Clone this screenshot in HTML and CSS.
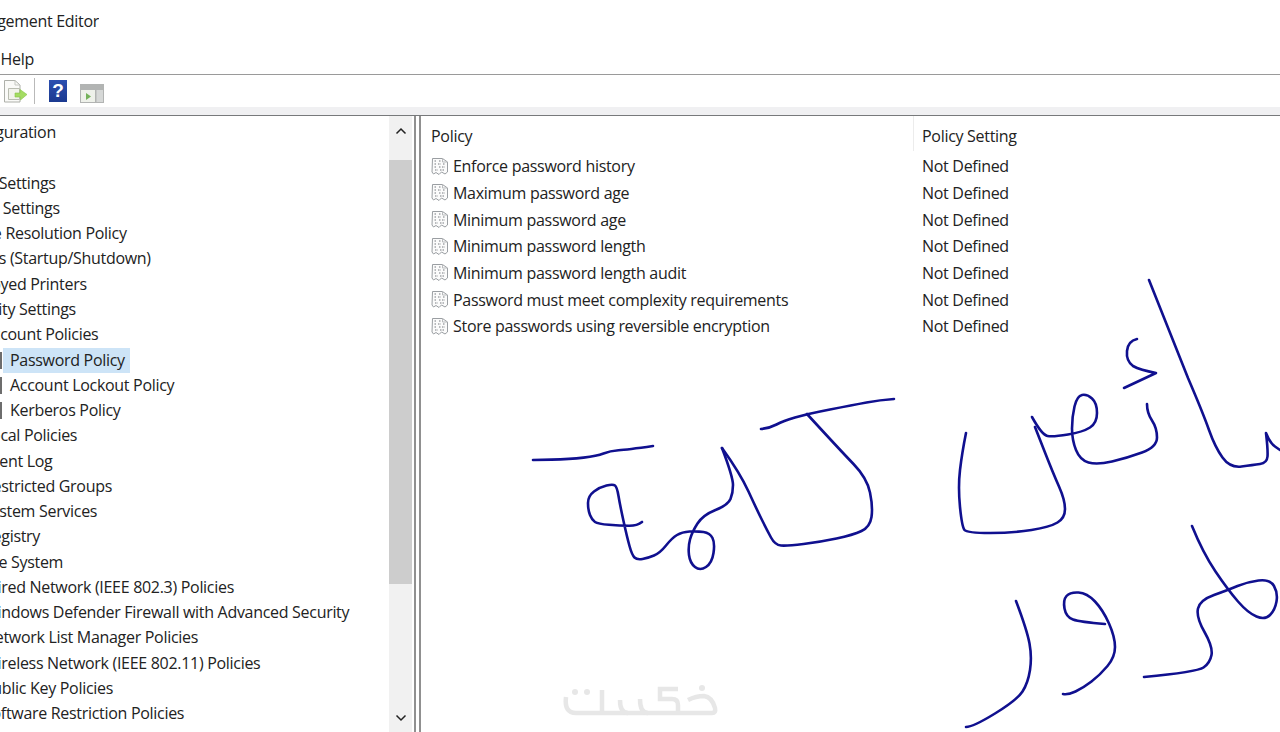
FILE: index.html
```html
<!DOCTYPE html>
<html lang="en">
<head>
    <meta charset="UTF-8">
    <title>Group Policy Management Editor</title>
    <link rel="stylesheet" href="styles.css">
</head>
<body>

<svg width="0" height="0" class="defs">
    <symbol id="policy-icon" viewBox="0 0 18 19">
        <path d="M1.5 1.5 H11.5 L16.5 5 V15 L14 17 L10.5 15 L8 17.5 L5 15.5 L2.5 17 L1 15 Z" fill="#fbfbfb" stroke="#9a9ea2"/>
        <path d="M3.5 4 H6 M8 4 H10 M3.5 7 H5 M7 7 H10 M12 7 H14 M3.5 10 H6 M8 10 H9.5 M11 10 H14 M4 13 H7 M9 13 H13" stroke="#777b80" stroke-width="1.2" stroke-dasharray="1.5 1"/>
        <path d="M11.5 1.5 V5 H16.5" fill="none" stroke="#b8bbbd"/>
    </symbol>
</svg>

<div class="title-bar"><span class="title-text">Group Policy Management Editor</span></div>

<div class="menu-bar"><span class="menu-text">Action View Help</span></div>

<div class="toolbar">
    <svg class="tool-export" width="24" height="24" viewBox="0 0 24 24">
        <path d="M.5 1.5 H11 L16 6 V23 H.5 Z" fill="#fafaf8" stroke="#aeb0aa"/>
        <path d="M11 1.5 V6 H16" fill="none" stroke="#c6c8c2"/>
        <path d="M4.5 9.5 H15.5 V20.5 H4.5 Z" fill="#f2f3ec" stroke="#b9bcb1"/>
        <path d="M11 14 H16 V10.5 L23 15.5 L16.5 21 V18 H11 Z" fill="#a4dc62" stroke="#86c548" stroke-width=".6"/>
    </svg>
    <div class="tool-sep"></div>
    <div class="tool-help">?</div>
    <svg class="tool-panel" width="24" height="19" viewBox="0 0 24 19">
        <rect width="24" height="19" fill="#b2b4b3"/>
        <rect x="1" y="6" width="14" height="12" fill="#eef1ea"/>
        <rect x="16.5" y="6" width="6.5" height="12" fill="#d6d8d7"/>
        <path d="M6 9 L11 12.5 L6 16 Z" fill="#74b25a"/>
    </svg>
</div>

<div class="band"></div>

<div class="panes">
    <div class="tree-pane">
        <div class="tree">
            <div class="tree-row lvl-a"><span>Computer Configuration</span></div>
            <div class="tree-row lvl-b"><span>Policies</span></div>
            <div class="tree-row lvl-1"><span>Software Settings</span></div>
            <div class="tree-row lvl-1 win"><span>Windows Settings</span></div>
            <div class="tree-row lvl-2"><span>Name Resolution Policy</span></div>
            <div class="tree-row lvl-2"><span>Scripts (Startup/Shutdown)</span></div>
            <div class="tree-row lvl-2"><span>Deployed Printers</span></div>
            <div class="tree-row lvl-2"><span>Security Settings</span></div>
            <div class="tree-row lvl-3"><span>Account Policies</span></div>
            <div class="tree-row lvl-4"><i class="tree-icon"></i><span class="selected">Password Policy</span></div>
            <div class="tree-row lvl-4"><i class="tree-icon"></i><span>Account Lockout Policy</span></div>
            <div class="tree-row lvl-4"><i class="tree-icon"></i><span>Kerberos Policy</span></div>
            <div class="tree-row lvl-3"><span>Local Policies</span></div>
            <div class="tree-row lvl-3"><span>Event Log</span></div>
            <div class="tree-row lvl-3"><span>Restricted Groups</span></div>
            <div class="tree-row lvl-3"><span>System Services</span></div>
            <div class="tree-row lvl-3"><span>Registry</span></div>
            <div class="tree-row lvl-3"><span>File System</span></div>
            <div class="tree-row lvl-3"><span>Wired Network (IEEE 802.3) Policies</span></div>
            <div class="tree-row lvl-3"><span>Windows Defender Firewall with Advanced Security</span></div>
            <div class="tree-row lvl-3"><span>Network List Manager Policies</span></div>
            <div class="tree-row lvl-3"><span>Wireless Network (IEEE 802.11) Policies</span></div>
            <div class="tree-row lvl-3"><span>Public Key Policies</span></div>
            <div class="tree-row lvl-3"><span>Software Restriction Policies</span></div>
        </div>
        <div class="scrollbar">
            <svg class="scroll-arrow" width="12" height="8" viewBox="0 0 12 8"><path d="M1.5 6.5 L6 2 L10.5 6.5" fill="none" stroke="#222" stroke-width="1.5"/></svg>
            <div class="scroll-gap-top"></div>
            <div class="scroll-thumb"></div>
            <div class="scroll-gap-bottom"></div>
            <svg class="scroll-arrow arrow-down" width="12" height="8" viewBox="0 0 12 8"><path d="M1.5 1.5 L6 6 L10.5 1.5" fill="none" stroke="#222" stroke-width="1.5"/></svg>
        </div>
    </div>

    <div class="list-pane">
        <div class="list-head">
            <div class="col-name">Policy</div>
            <div class="col-setting">Policy Setting</div>
        </div>
        <div class="list-row">
            <div class="col-name"><svg class="row-icon"><use href="#policy-icon"/></svg>Enforce password history</div>
            <div class="col-setting">Not Defined</div>
        </div>
        <div class="list-row">
            <div class="col-name"><svg class="row-icon"><use href="#policy-icon"/></svg>Maximum password age</div>
            <div class="col-setting">Not Defined</div>
        </div>
        <div class="list-row">
            <div class="col-name"><svg class="row-icon"><use href="#policy-icon"/></svg>Minimum password age</div>
            <div class="col-setting">Not Defined</div>
        </div>
        <div class="list-row">
            <div class="col-name"><svg class="row-icon"><use href="#policy-icon"/></svg>Minimum password length</div>
            <div class="col-setting">Not Defined</div>
        </div>
        <div class="list-row">
            <div class="col-name"><svg class="row-icon"><use href="#policy-icon"/></svg>Minimum password length audit</div>
            <div class="col-setting">Not Defined</div>
        </div>
        <div class="list-row">
            <div class="col-name"><svg class="row-icon"><use href="#policy-icon"/></svg>Password must meet complexity requirements</div>
            <div class="col-setting">Not Defined</div>
        </div>
        <div class="list-row">
            <div class="col-name"><svg class="row-icon"><use href="#policy-icon"/></svg>Store passwords using reversible encryption</div>
            <div class="col-setting">Not Defined</div>
        </div>
    </div>
</div>

<!-- handwriting drawn over the screenshot -->
<svg class="scribble" width="1280" height="732" viewBox="0 0 1280 732">
    <g class="ink">
        <path d="M533 460 L551.5 459.6 Q570 459.3 583.5 457.6 Q597 456 603.5 453.5 Q610 451 618.5 450.3 Q627 449.7 653 446"/>
        <path d="M642 522 Q637 526 628.5 525.8 Q620 525.7 609 524.8 Q598 524 595 522 Q592 520 590 515 Q588 510 588 503 Q588 496 594 491.5 Q600 487 606.5 485.5 Q613 484 615 485.5 Q617 487 618.5 496 Q620 505 623.5 521 Q627 537 629.5 546 Q632 555 634.5 557.5 Q637 560 642.5 559 Q648 558 654 555.5 Q660 553 666 545.5 Q672 538 677 535 Q682 532 689.5 531.5 Q697 531 703.5 532 Q710 533 712.5 538 Q715 543 713.5 553 Q712 563 706 567 Q700 571 695 567 Q690 563 689 555 Q688 547 690 539.5 Q692 532 697.5 523.5 Q703 515 715.5 510 Q728 505 730.5 499 Q733 493 733 485 Q733 477 722 448"/>
        <path d="M722 448 Q740 473 748.5 491.5 Q757 510 762 520 Q767 530 771 537.5 Q775 545 781 545.5 Q787 546 803.5 544 Q820 542 836.5 538.5 Q853 535 861.5 531 Q870 527 871.5 517 Q873 507 870 492.5 Q867 478 853.5 464 Q840 450 807 414"/>
        <path d="M761 429 Q770 428 776.5 424.5 Q783 421 795 417.5 Q807 414 830 409.5 Q853 405 866.5 402.5 Q880 400 894 399"/>
        <path d="M1149 280 L1188 378 Q1203 413 1209 430 Q1215 447 1222.5 457.5 Q1230 468 1241.5 466.5 Q1253 465 1260 464 Q1267 463 1267.5 456.5 Q1268 450 1266 433 Q1270 443 1275 446.5 L1280 450"/>
        <path d="M1137 339 Q1128 341 1127 351 Q1126 361 1133 366 Q1140 370 1156 373 L1124 388"/>
        <path d="M1147 404 Q1147 413 1152 420.5 Q1157 428 1157 437.5 Q1157 447 1142 452.5 Q1127 458 1112 461.5 Q1097 465 1088.5 462.5 Q1080 460 1076 450 Q1072 440 1072 428.5 Q1072 417 1074.5 406.5 Q1077 396 1082 395 Q1087 394 1092 398.5 Q1097 403 1097 413 Q1097 423 1090 427.5 Q1083 432 1068 434.5 Q1053 437 1047.5 436 Q1042 435 1032 417"/>
        <path d="M1035 427 L1044 450 Q1053 473 1059 486.5 Q1065 500 1065 509 Q1065 518 1057.5 522.5 Q1050 527 1031.5 530 Q1013 533 990 533 Q967 533 964.5 530 Q962 527 960 507 Q958 487 960 470 Q962 453 966 433"/>
        <path d="M1016 601 Q1027 630 1029.5 643.5 Q1032 657 1030 670 Q1028 683 1022.5 691.5 Q1017 700 995 713.5 Q973 727 966 727"/>
        <path d="M1105 624 Q1080 622 1073 619.5 Q1066 617 1064.5 608.5 Q1063 600 1066.5 596 Q1070 592 1078.5 592.5 Q1087 593 1095 601.5 Q1103 610 1109 623.5 Q1115 637 1115 647 Q1115 657 1107.5 666 Q1100 675 1091.5 681.5 Q1083 688 1075.5 691.5 Q1068 695 1063 694"/>
        <path d="M1192 526 Q1203 553 1215.5 571.5 Q1228 590 1238 601.5 Q1248 613 1256.5 616.5 Q1265 620 1270 615 Q1275 610 1276.5 601.5 Q1278 593 1274 586 Q1270 579 1258.5 580.5 Q1247 582 1237.5 586 Q1228 590 1214 595 Q1200 600 1198 608.5 Q1196 617 1204.5 632 Q1213 647 1211.5 655 Q1210 663 1203.5 667.5 Q1197 672 1144 677"/>
    </g>
    <g class="logo">
        <path d="M566 697 Q564 713 576 713 H712 Q716 713 715 708 Q712 697 704 696 Q696 696 688 700"/>
        <path d="M602 690 V713 M620 700 Q620 713 628 713 M640 699 Q640 713 648 713"/>
        <path d="M678 689 H660 V699 H672 Q678 699 678 705 V713"/>
        <circle cx="575" cy="692" r="3"/>
        <circle cx="587" cy="692" r="3"/>
        <circle cx="702" cy="688" r="3"/>
    </g>
</svg>

</body>
</html>
```

FILE: styles.css
```css
html, body {
    height: 100%;
}

body {
    margin: 0;
    height: 732px;
    overflow: hidden;
    position: relative;
    background: #fff;
    color: #222;
    font-family: 'Open Sans', sans-serif;
    font-size: 16px;
    letter-spacing: -0.3px;
    display: flex;
    flex-direction: column;
}

.defs {
    position: absolute;
}

.title-bar {
    height: 41px;
    padding-bottom: 2px;
    flex: none;
    overflow: hidden;
    display: flex;
    align-items: center;
    justify-content: flex-end;
    width: 99px;
}

.title-text {
    white-space: nowrap;
}

.menu-bar {
    height: 31px;
    flex: none;
    width: 34px;
    overflow: hidden;
    display: flex;
    justify-content: flex-end;
    align-items: center;
    white-space: nowrap;
}

.menu-text {
    flex: none;
}

.toolbar {
    height: 32px;
    flex: none;
    border-top: 1px solid #9a9a9a;
    display: flex;
    align-items: center;
    padding-left: 4px;
}

.tool-sep {
    width: 1px;
    height: 26px;
    margin: 0 14px 0 6px;
    background: #b9b9b9;
}

.tool-help {
    width: 18px;
    height: 22px;
    background: linear-gradient(#2c4fb0, #1b3a90);
    color: #fff;
    font-family: 'Liberation Sans', sans-serif;
    font-weight: 700;
    font-size: 19px;
    line-height: 22px;
    text-align: center;
    margin-right: 13px;
}

.tool-panel {
    margin-top: 4px;
}

.band {
    height: 8px;
    flex: none;
    background: #f0f0f2;
}

.panes {
    flex: 1;
    min-height: 0;
    display: flex;
    border-top: 1px solid #77797b;
}

.tree-pane {
    width: 414px;
    flex: none;
    display: flex;
    border-right: 2px solid #909090;
    overflow: hidden;
}

.tree {
    flex: 1;
    min-width: 0;
    overflow: hidden;
    padding-top: 4px;
}

.tree-row {
    height: 25.27px;
    line-height: 25px;
    white-space: nowrap;
    display: flex;
    align-items: center;
}

.lvl-a { margin-left: -119px; }
.lvl-b { margin-left: -93px; }
.lvl-1 { margin-left: -69px; }
.lvl-1.win { margin-left: -67px; }
.lvl-2 { margin-left: -42px; }
.lvl-3 { margin-left: -17px; }
.lvl-4 { margin-left: 0; }

.tree-icon {
    width: 2px;
    height: 17px;
    margin-right: 1px;
    background: #6d6d6d;
    flex: none;
}

.lvl-4 span {
    padding: 0 5px 0 7px;
}

.selected {
    background: #cde4f7;
}

.scrollbar {
    width: 23px;
    flex: none;
    margin-right: 2px;
    background: #f1f1f1;
    display: flex;
    flex-direction: column;
    align-items: center;
}

.scroll-arrow {
    flex: none;
    margin: 11px 0;
}

.arrow-down {
    margin-bottom: 10px;
}

.scroll-gap-top {
    height: 14px;
    flex: none;
}

.scroll-thumb {
    width: 100%;
    height: 424px;
    flex: none;
    background: #cdcdcd;
}

.scroll-gap-bottom {
    flex: 1;
}

.list-pane {
    flex: 1;
    margin-left: 3px;
    border-left: 2px solid #909090;
    padding-top: 5px;
}

.list-head,
.list-row {
    display: flex;
    white-space: nowrap;
}

.list-head {
    height: 32px;
    align-items: flex-start;
    line-height: 30px;
}

.list-row {
    height: 26.67px;
    align-items: center;
}

.col-name {
    width: 492px;
    flex: none;
    padding-left: 10px;
    box-sizing: border-box;
    display: flex;
    align-items: center;
}

.col-setting {
    padding-left: 9px;
}

.list-head .col-setting {
    border-left: 1px solid #ececec;
    height: 35px;
    line-height: 40px;
    margin-top: -5px;
    padding-left: 8px;
}

.row-icon {
    width: 18px;
    height: 19px;
    flex: none;
    margin-right: 4px;
}

.scribble {
    position: absolute;
    top: 0;
    left: 0;
    pointer-events: none;
}

.ink path {
    fill: none;
    stroke: #10108f;
    stroke-width: 2.6;
    stroke-linejoin: round;
    stroke-linecap: round;
}

.logo path {
    fill: none;
    stroke: #e7e7e7;
    stroke-width: 4.5;
}

.logo circle {
    fill: #e7e7e7;
}
```
